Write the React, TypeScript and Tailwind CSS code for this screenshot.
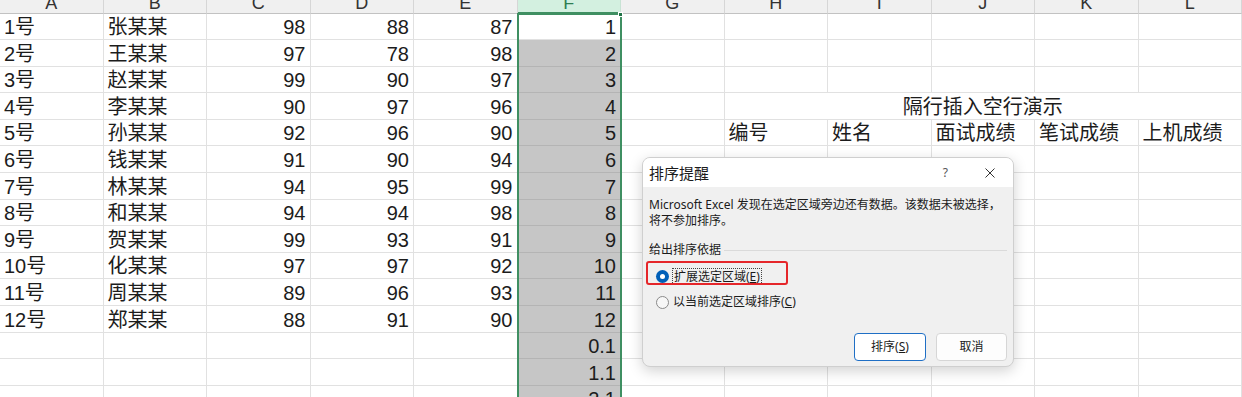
import React from 'react';

const data: string[][] = [
  ['1号', '张某某', '98', '88', '87', '1'],
  ['2号', '王某某', '97', '78', '98', '2'],
  ['3号', '赵某某', '99', '90', '97', '3'],
  ['4号', '李某某', '90', '97', '96', '4'],
  ['5号', '孙某某', '92', '96', '90', '5'],
  ['6号', '钱某某', '91', '90', '94', '6'],
  ['7号', '林某某', '94', '95', '99', '7'],
  ['8号', '和某某', '94', '94', '98', '8'],
  ['9号', '贺某某', '99', '93', '91', '9'],
  ['10号', '化某某', '97', '97', '92', '10'],
  ['11号', '周某某', '89', '96', '93', '11'],
  ['12号', '郑某某', '88', '91', '90', '12'],
  ['', '', '', '', '', '0.1'],
  ['', '', '', '', '', '1.1'],
  ['', '', '', '', '', '2.1'],
];

const letters = ['A', 'B', 'C', 'D', 'E', 'F', 'G', 'H', 'I', 'J', 'K', 'L'];
const headings = ['编号', '姓名', '面试成绩', '笔试成绩', '上机成绩'];

const Cell: React.FC<{ text?: string; right?: boolean; selected?: boolean; span?: boolean; center?: boolean }> = ({
  text,
  right,
  selected,
  span,
  center,
}) => (
  <div
    className={`flex items-end overflow-visible whitespace-nowrap border-r border-b px-[4px] pb-[1px] ${
      selected ? 'bg-[#c6c6c6] border-[#b4b4b4]' : 'bg-white border-[#e1e1e1]'
    } ${right ? 'justify-end' : center ? 'justify-center' : 'justify-start'} ${span ? 'col-span-5' : ''}`}
  >
    {text && <span className="leading-[22px]">{text}</span>}
  </div>
);

const Radio: React.FC<{ checked?: boolean }> = ({ checked }) =>
  checked ? (
    <span className="w-[13px] h-[13px] rounded-full bg-[#005fb8] flex items-center justify-center shrink-0">
      <span className="w-[5px] h-[5px] rounded-full bg-white" />
    </span>
  ) : (
    <span className="w-[13px] h-[13px] rounded-full border border-[#8a8a8a] bg-[#f7f7f7] shrink-0" />
  );

const SortDialog: React.FC = () => (
  <div className="absolute left-[642px] top-[157px] w-[372px] h-[210px] rounded-[8px] overflow-hidden bg-[#f0f0f0] border border-[#cfcfcf] shadow-[0_4px_14px_rgba(0,0,0,0.18)] flex flex-col text-[#1b1b1b] [font-family:'Noto_Sans','Noto_Sans_CJK_SC',sans-serif]">
    <div className="h-[29px] bg-white flex items-center pl-[6px] shrink-0">
      <span className="text-[15px] leading-[20px] [font-family:'Noto_Sans_CJK_SC',sans-serif]">排序提醒</span>
      <span className="ml-auto mr-[37px] text-[12px] text-[#555]">?</span>
      <svg className="mr-[18px]" width="10" height="10" viewBox="0 0 10 10">
        <path d="M0.5 0.5 L9.5 9.5 M9.5 0.5 L0.5 9.5" stroke="#333" strokeWidth="1" />
      </svg>
    </div>
    <div className="relative flex-1 px-[6px] pt-[10px] text-[12px] leading-[16px]">
      <p>
        Microsoft Excel 发现在选定区域旁边还有数据。该数据未被选择，
        <br />
        将不参加排序。
      </p>
      <div className="mt-[13px] flex items-center">
        <span>给出排序依据</span>
        <div className="flex-1 h-px bg-[#dadada] ml-[3px]" />
      </div>
      <div className="mt-[9px] h-[18px] flex items-center pl-[7px] gap-[3px]">
        <Radio checked />
        <span className="border border-dotted border-[#444] px-[1px] leading-[15px]">
          扩展选定区域(<span className="underline">E</span>)
        </span>
      </div>
      <div className="mt-[8px] h-[18px] flex items-center pl-[7px] gap-[4px]">
        <Radio />
        <span>
          以当前选定区域排序(<span className="underline">C</span>)
        </span>
      </div>
      <div className="mt-[22px] flex justify-end gap-[10px]">
        <button className="w-[72px] h-[28px] rounded-[4px] bg-white border border-[#1f6fc5] text-[12px]">
          排序(<span className="underline">S</span>)
        </button>
        <button className="w-[71px] h-[28px] rounded-[4px] bg-[#fdfdfd] border border-[#d6d6d6] text-[12px]">
          取消
        </button>
      </div>
      {/* red annotation box */}
      <div className="absolute left-[3px] top-[74px] w-[142px] h-[24px] border-2 border-[#e5262a] rounded-[3px]" />
    </div>
  </div>
);

export default function App() {
  return (
    <div className="relative w-[1242px] h-[397px] overflow-hidden bg-white text-[#1c1c1c] text-[20px] [font-family:'Liberation_Sans','Noto_Sans_CJK_SC',sans-serif]">
      <div className="relative grid grid-cols-[repeat(12,103.5px)] grid-rows-[13.5px_repeat(15,26.6px)]">
        {letters.map((l) => (
          <div
            key={l}
            className={`overflow-hidden flex justify-center border-r ${
              l === 'F'
                ? 'bg-[#d3f0e0] text-[#2f7d52] border-[#c8e3d4] border-b-2 border-b-[#3f8f62]'
                : 'bg-[#f0f0f0] text-[#333] border-[#d6d6d6] border-b border-b-[#c2c2c2]'
            }`}
          >
            <span className="text-[18px] leading-[20px] -mt-[7px]">{l}</span>
          </div>
        ))}
        {data.map((row, r) => {
          const cells: React.ReactNode[] = [];
          row.forEach((v, c) => {
            cells.push(
              <Cell key={`${r}-${c}`} text={v} right={c >= 2} selected={c === 5 && r >= 1} />
            );
          });
          cells.push(<Cell key={`${r}-g`} />);
          if (r === 3) {
            cells.push(<Cell key={`${r}-t`} text="隔行插入空行演示" span center />);
          } else if (r === 4) {
            headings.forEach((h) => cells.push(<Cell key={`${r}-${h}`} text={h} />));
          } else {
            for (let k = 0; k < 5; k++) cells.push(<Cell key={`${r}-e${k}`} />);
          }
          return cells;
        })}
        {/* selection outline of column F */}
        <div className="absolute col-start-6 col-end-7 row-start-2 row-end-[17] -left-[1px] -right-[1px] -top-[1px] bottom-0 border-2 border-[#3f8f62] pointer-events-none">
          <div className="absolute -right-[3px] -top-[3px] w-[5px] h-[5px] bg-[#217346] border border-white" />
        </div>
      </div>
      <SortDialog />
    </div>
  );
}
